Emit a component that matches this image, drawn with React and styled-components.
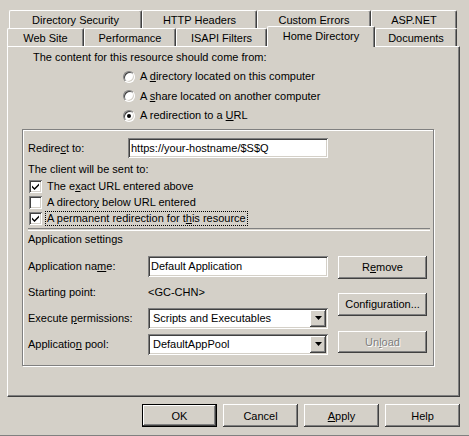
import styled, { createGlobalStyle } from "styled-components";

const Global = createGlobalStyle`
    html, body {
        margin: 0;
        padding: 0;
        background: #d4d0c8;
    }
    body {
        font-family: "Liberation Sans", Arial, sans-serif;
        font-size: 11px;
        color: #000;
    }
`

const raised = `
    box-shadow: inset -1px -1px #404040, inset 1px 1px #ffffff,
        inset -2px -2px #808080, inset 2px 2px #d4d0c8;
`

const sunken = `
    box-shadow: inset 1px 1px #808080, inset -1px -1px #ffffff,
        inset 2px 2px #404040, inset -2px -2px #d4d0c8;
`

const Window = styled.div`
    width: 469px;
    height: 436px;
    box-sizing: border-box;
    border-bottom: 1px solid #808080;
    padding: 10px 9px 0 7px;
    display: flex;
    flex-direction: column;
`

const TabRow = styled.div`
    display: flex;
    height: 18px;
    padding-left: ${p => p.$indent}px;
`

const Tab = styled.div`
    position: relative;
    box-sizing: border-box;
    width: ${p => p.$w}px;
    height: ${p => (p.$active ? 21 : 18)}px;
    margin-top: ${p => (p.$active ? -2 : 0)}px;
    z-index: ${p => (p.$active ? 2 : 0)};
    display: flex;
    align-items: center;
    justify-content: center;
    padding-bottom: ${p => (p.$active ? 3 : 0)}px;
    background: #d4d0c8;
    border-top: 1px solid #ffffff;
    border-left: 1px solid #ffffff;
    border-right: 1px solid #404040;
    border-radius: 2px 2px 0 0;
    box-shadow: inset -1px 0 #808080;
    white-space: nowrap;
`

const Panel = styled.div`
    box-sizing: border-box;
    width: 453px;
    height: 351px;
    border-top: 1px solid #ffffff;
    border-left: 1px solid #ffffff;
    border-right: 1px solid #404040;
    border-bottom: 1px solid #404040;
    box-shadow: inset -1px -1px #808080;
    padding: 4px 26px 0 14px;
    display: flex;
    flex-direction: column;
`

const Text = styled.div`
    line-height: 13px;
    height: 13px;
    margin-left: ${p => p.$indent || 0}px;
    margin-top: ${p => p.$top || 0}px;
    white-space: nowrap;
`

const RadioList = styled.div`
    display: flex;
    flex-direction: column;
    gap: 6.5px;
    margin: 6px 0 0 101px;
`

const Option = styled.div`
    display: flex;
    align-items: center;
    gap: ${p => p.$gap || 5}px;
    height: ${p => p.$h || 13}px;
    line-height: 13px;
    white-space: nowrap;
`

const RadioDot = styled.span`
    box-sizing: border-box;
    width: 12px;
    height: 12px;
    border-radius: 50%;
    background: #ffffff;
    border: 1px solid;
    border-color: #808080 #ffffff #ffffff #808080;
    box-shadow: inset 1px 1px #404040, inset -1px -1px #d4d0c8;
    display: flex;
    align-items: center;
    justify-content: center;

    &::after {
        content: "";
        width: 4px;
        height: 4px;
        border-radius: 50%;
        background: ${p => (p.$on ? "#000" : "transparent")};
    }
`

const Check = styled.span`
    box-sizing: border-box;
    width: 13px;
    height: 13px;
    margin-left: 1px;
    background: #ffffff;
    ${sunken}
    display: flex;
    align-items: center;
    justify-content: center;
`

const Focus = styled.span`
    outline: 1px dotted #000;
    outline-offset: 0;
    padding: 0 1px;
    margin-left: -1px;
`

const Group = styled.div`
    box-sizing: border-box;
    width: 412px;
    height: 237px;
    margin-top: 6.5px;
    border: 1px solid #808080;
    box-shadow: 1px 1px 0 #ffffff, inset 1px 1px 0 #ffffff;
    padding: 8px 3px 0 5px;
    display: flex;
    flex-direction: column;
`

const FieldRow = styled.div`
    display: flex;
    align-items: center;
    height: ${p => p.$h || 21}px;
`

const Label = styled.div`
    width: ${p => p.$w}px;
    flex-shrink: 0;
    white-space: nowrap;
`

const Input = styled.div`
    box-sizing: border-box;
    width: ${p => p.$w}px;
    height: ${p => p.$h}px;
    background: #ffffff;
    ${sunken}
    padding: 0 3px;
    display: flex;
    align-items: center;
    white-space: nowrap;
    overflow: hidden;
`

const CheckList = styled.div`
    display: flex;
    flex-direction: column;
    margin-top: 2.5px;
`

const Separator = styled.div`
    height: 1px;
    margin-top: 1px;
    border-top: 1px solid #808080;
    border-bottom: 1px solid #ffffff;
`

const AppArea = styled.div`
    display: flex;
    gap: 10px;
    margin-top: 9.5px;
`

const AppFields = styled.div`
    display: flex;
    flex-direction: column;
    gap: 5px;
`

const SideButtons = styled.div`
    display: flex;
    flex-direction: column;
`

const Select = styled.div`
    box-sizing: border-box;
    width: 180px;
    height: 21px;
    background: #ffffff;
    ${sunken}
    padding: 2px 2px 2px 5px;
    display: flex;
    align-items: center;
    justify-content: space-between;
`

const DropButton = styled.span`
    width: 16px;
    height: 17px;
    background: #d4d0c8;
    ${raised}
    display: flex;
    align-items: center;
    justify-content: center;
`

const Button = styled.div`
    box-sizing: border-box;
    width: ${p => p.$w || 89}px;
    height: ${p => p.$h || 23}px;
    margin-top: ${p => p.$top || 0}px;
    background: #d4d0c8;
    ${raised}
    ${p => p.$default && `
        border: 1px solid #000;
        box-shadow: inset -1px -1px #404040, inset 1px 1px #ffffff,
            inset -2px -2px #808080;
    `}
    color: ${p => (p.$disabled ? "#808080" : "#000")};
    text-shadow: ${p => (p.$disabled ? "1px 1px #ffffff" : "none")};
    display: flex;
    align-items: center;
    justify-content: center;
    white-space: nowrap;
`

const Footer = styled.div`
    display: flex;
    justify-content: flex-end;
    gap: 6px;
    margin-top: 7px;
`

const Arrow = () => (
    <svg width="7" height="4" viewBox="0 0 7 4">
        <path d="M0 0H7L3.5 4Z" fill="#000" />
    </svg>
)

const Tick = () => (
    <svg width="7" height="7" viewBox="0 0 7 7">
        <path d="M0 2.5L2.5 5L7 0.5V2.5L2.5 7L0 4.5Z" fill="#000" />
    </svg>
)

const backTabs = [
    ["Directory Security", 133],
    ["HTTP Headers", 115],
    ["Custom Errors", 114],
    ["ASP.NET", 86],
]

const frontTabs = [
    ["Web Site", 77],
    ["Performance", 92],
    ["ISAPI Filters", 91],
    ["Home Directory", 108, true],
    ["Documents", 82],
]

export default function App() {
    return (
        <>
            <Global />
            <Window>
                <TabRow $indent={2}>
                    {backTabs.map(([name, w]) => (
                        <Tab key={name} $w={w}>{name}</Tab>
                    ))}
                </TabRow>
                <TabRow $indent={0}>
                    {frontTabs.map(([name, w, active]) => (
                        <Tab key={name} $w={w} $active={active}>{name}</Tab>
                    ))}
                </TabRow>
                <Panel>
                    <Text $indent={11}>The content for this resource should come from:</Text>
                    <RadioList>
                        <Option><RadioDot /><span>A <u>d</u>irectory located on this computer</span></Option>
                        <Option><RadioDot /><span>A <u>s</u>hare located on another computer</span></Option>
                        <Option><RadioDot $on /><span>A redirection to a <u>U</u>RL</span></Option>
                    </RadioList>
                    <Group>
                        <FieldRow $h={20}>
                            <Label $w={100}>Redire<u>c</u>t to:</Label>
                            <Input $w={200} $h={20}>https://your-hostname/$S$Q</Input>
                        </FieldRow>
                        <Text $top={5.5}>The client will be sent to:</Text>
                        <CheckList>
                            <Option $h={16}><Check><Tick /></Check><span>The e<u>x</u>act URL entered above</span></Option>
                            <Option $h={16}><Check /><span>A director<u>y</u> below URL entered</span></Option>
                            <Option $h={16}><Check><Tick /></Check><Focus>A permanent redirection for t<u>h</u>is resource</Focus></Option>
                        </CheckList>
                        <Separator />
                        <Text $top={2.5}>Application settings</Text>
                        <AppArea>
                            <AppFields>
                                <FieldRow>
                                    <Label $w={120}>Application na<u>m</u>e:</Label>
                                    <Input $w={180} $h={21}>Default Application</Input>
                                </FieldRow>
                                <FieldRow>
                                    <Label $w={120}>Starting point:</Label>
                                    <span>&lt;GC-CHN&gt;</span>
                                </FieldRow>
                                <FieldRow>
                                    <Label $w={120}>Execute <u>p</u>ermissions:</Label>
                                    <Select><span>Scripts and Executables</span><DropButton><Arrow /></DropButton></Select>
                                </FieldRow>
                                <FieldRow>
                                    <Label $w={120}>Applicatio<u>n</u> pool:</Label>
                                    <Select><span>DefaultAppPool</span><DropButton><Arrow /></DropButton></Select>
                                </FieldRow>
                            </AppFields>
                            <SideButtons>
                                <Button><span>R<u>e</u>move</span></Button>
                                <Button $top={14}><span>Confi<u>g</u>uration...</span></Button>
                                <Button $top={15} $h={22} $disabled><span>Un<u>l</u>oad</span></Button>
                            </SideButtons>
                        </AppArea>
                    </Group>
                </Panel>
                <Footer>
                    <Button $w={75} $default>OK</Button>
                    <Button $w={75}>Cancel</Button>
                    <Button $w={75}><span><u>A</u>pply</span></Button>
                    <Button $w={75}>Help</Button>
                </Footer>
            </Window>
        </>
    )
}
